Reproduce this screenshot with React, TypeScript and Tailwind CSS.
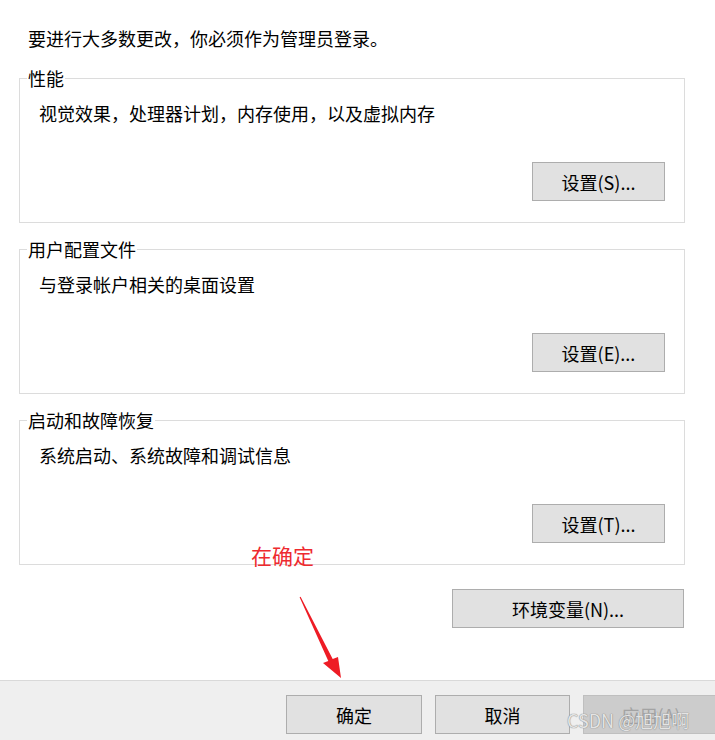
import React from "react";

interface GroupProps {
  title: string;
  desc: string;
  button: string;
  className?: string;
}

// Win32-style push button
const PushButton: React.FC<{ label: string; className?: string; disabled?: boolean }> = ({
  label,
  className = "",
  disabled = false,
}) => (
  <button
    type="button"
    disabled={disabled}
    className={
      "h-[39px] shrink-0 border text-[18px] leading-none " +
      (disabled
        ? "bg-[#cccccc] border-[#bfbfbf] text-[#a3a3a3] "
        : "bg-[#e1e1e1] border-[#adadad] text-black ") +
      className
    }
  >
    {label}
  </button>
);

// Group box with its caption sitting on the top border
const GroupBox: React.FC<GroupProps> = ({ title, desc, button, className = "" }) => (
  <fieldset className={"ml-[19px] w-[666px] border border-[#dcdcdc] " + className}>
    <legend className="ml-[7px] px-[1px] text-[18px] leading-[24px] text-black">{title}</legend>
    <div className="flex flex-col pl-[19px] pr-[19px] pt-[11px] pb-[21px]">
      <div className="text-[18px] leading-[24px] text-black">{desc}</div>
      <div className="mt-[37px] flex justify-end">
        <PushButton label={button} className="w-[133px]" />
      </div>
    </div>
  </fieldset>
);

export default function App() {
  return (
    <div className="relative flex h-[740px] w-[715px] flex-col overflow-hidden bg-white font-['Noto_Sans_CJK_SC','Microsoft_YaHei',sans-serif]">
      <div className="pl-[28px] pt-[26px] text-[18px] leading-[24px] text-black">
        要进行大多数更改，你必须作为管理员登录。
      </div>

      <GroupBox
        className="mt-[16px]"
        title="性能"
        desc="视觉效果，处理器计划，内存使用，以及虚拟内存"
        button="设置(S)..."
      />
      <GroupBox
        className="mt-[14px]"
        title="用户配置文件"
        desc="与登录帐户相关的桌面设置"
        button="设置(E)..."
      />
      <GroupBox
        className="mt-[14px]"
        title="启动和故障恢复"
        desc="系统启动、系统故障和调试信息"
        button="设置(T)..."
      />

      <div className="mt-[24px] flex justify-end pr-[31px]">
        <PushButton label="环境变量(N)..." className="w-[232px]" />
      </div>

      {/* dialog footer */}
      <div className="mt-auto flex h-[60px] gap-[13px] overflow-hidden border-t border-[#d9d9d9] bg-[#efefef] pl-[286px] pt-[14px]">
        <PushButton label="确定" className="w-[136px]" />
        <PushButton label="取消" className="w-[135px]" />
        <PushButton label="应用(A)" className="w-[136px]" disabled />
      </div>

      {/* red hint + arrow */}
      <div className="absolute left-[251px] top-[541px] text-[21px] leading-[28px] text-[#ee2a2f]">
        在确定
      </div>
      <svg className="absolute left-[290px] top-[590px]" width="60" height="95" viewBox="0 0 60 95">
        <polygon
          points="9.6,7.3 10.6,6.7 42.7,68.9 48,67 51,88 33,73 38.3,71.1"
          fill="#ee1c25"
        />
      </svg>

      {/* watermark */}
      <div className="absolute left-[567px] top-[707px] text-[18px] leading-[26px] text-[#e4e4e4] [text-shadow:0_0_1px_#8a8a8a,0_0_1px_#8a8a8a]">
        CSDN @旭旭啊
      </div>
    </div>
  );
}
